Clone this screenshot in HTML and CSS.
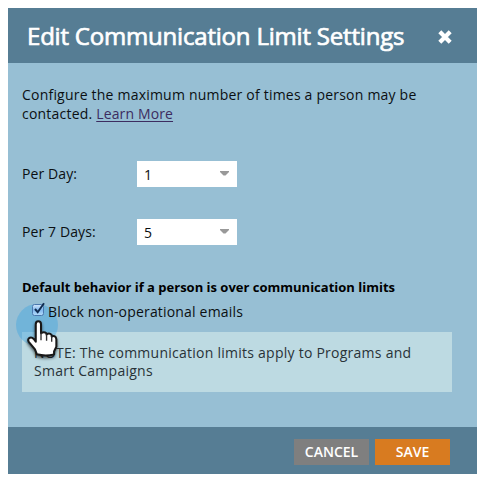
FILE: index.html
```html
<!DOCTYPE html>
<html lang="en">
<head>
<meta charset="utf-8">
<title>Edit Communication Limit Settings</title>
<link rel="stylesheet" href="styles.css">
</head>
<body>
<section class="dialog">
  <header class="header">
    <h1 class="title">Edit Communication Limit Settings</h1>
    <svg class="close" width="14" height="14" viewBox="0 0 14 14"><path d="M1.8 1.8 12.2 12.2M12.2 1.8 1.8 12.2" stroke="#fff" stroke-width="4.2"/></svg>
  </header>
  <main class="body">
    <p class="intro">Configure the maximum number of times a person may be<br>contacted. <a class="link">Learn More</a></p>
    <div class="field">
      <span class="label">Per Day:</span>
      <div class="select"><span>1</span><svg width="9" height="5" viewBox="0 0 9 5"><path d="M0 0H9V1L5.5 4.5H3.5L0 1Z" fill="#999"/></svg></div>
    </div>
    <div class="field">
      <span class="label">Per 7 Days:</span>
      <div class="select"><span>5</span><svg width="9" height="5" viewBox="0 0 9 5"><path d="M0 0H9V1L5.5 4.5H3.5L0 1Z" fill="#999"/></svg></div>
    </div>
    <h2 class="subhead">Default behavior if a person is over communication limits</h2>
    <div class="halo"></div>
    <div class="check">
      <svg width="14" height="15" viewBox="0 0 14 15"><defs><linearGradient id="box" x1="0" y1="0" x2="0" y2="1"><stop offset="0" stop-color="#d4e8fb"/><stop offset=".5" stop-color="#82b8ee"/><stop offset="1" stop-color="#b5ddfb"/></linearGradient></defs><rect x=".5" y="2.5" width="11" height="11" rx="2" fill="url(#box)" stroke="#4b78ae"/><path d="M3 7 5.7 10.2 12 1.2" fill="none" stroke="#102c50" stroke-width="2"/></svg>
      <span>Block non-operational emails</span>
    </div>
    <div class="note">NOTE: The communication limits apply to Programs and<br>Smart Campaigns</div>
    <svg class="hand" width="41" height="50" viewBox="0 0 36 44"><path d="M12.2 32 10.5 27.7 5.2 21.2Q3.7 19 5.5 17.6Q7.5 16.5 9.4 18.4L11.2 20.8V5.5Q11.2 2.8 13.4 2.8Q15.8 2.8 15.8 5.5V13.5Q18.3 11.6 20.5 13.4L20.7 14.5Q23.3 12.6 25.2 15.1V16.3Q28.7 14.8 29.3 18.6V25.2L27.3 29.5V32Q20 34 12.2 32Z" fill="#fff" stroke="#181818" stroke-width="1.8" stroke-linejoin="round"/><path d="M15.8 13V19.5M20.7 14.5V20M25.2 16V21" stroke="#333" stroke-width="1.2"/></svg>
  </main>
  <footer class="footer">
    <button class="btn cancel">CANCEL</button>
    <button class="btn save">SAVE</button>
  </footer>
</section>
</body>
</html>
```

FILE: styles.css
```css
* { box-sizing: border-box; }
body { margin: 0; padding: 8px; background: #fff; font: 14px/19px "Open Sans", "Noto Sans", sans-serif; color: #0b0f12; }
.dialog { width: 469px; height: 466px; display: flex; flex-direction: column; background: #97bfd4; white-space: nowrap; }
.header { height: 55px; flex: none; display: flex; align-items: center; justify-content: space-between; padding: 0 25px 0 19px; background: #567d94; }
.title { margin: 0; font-size: 24px; line-height: 32px; font-weight: 400; color: #fff; letter-spacing: -0.2px; -webkit-text-stroke: .7px #fff; }
.close { margin-top: 3px; }
.body { position: relative; flex: 1; padding: 22px 25px 0 14px; }
.intro { margin: 0 0 38px; letter-spacing: 0.21px; }
.link { color: #3c2c60; text-decoration: underline; text-underline-offset: 2px; letter-spacing: 0.13px; }
.field { display: flex; align-items: center; height: 26px; margin-bottom: 32px; }
.label { width: 115px; margin-top: -2px; letter-spacing: 0.1px; }
.select { width: 100px; height: 26px; display: flex; justify-content: space-between; align-items: center; background: #fff; padding: 1px 8px 0 7px; }
.select svg { margin-top: -3px; }
.subhead { margin: 0; padding-top: 1px; font-size: 13px; line-height: 18px; font-weight: 700; color: #000; }
.check { position: relative; display: flex; align-items: center; height: 20px; margin: 5px 0 11px 10px; gap: 2px; letter-spacing: 0.18px; }
.check svg { margin-top: -3px; }
.note { height: 60px; padding: 12px; line-height: 18px; letter-spacing: 0.25px; background: #bddae2; color: #293338; }
.halo { position: absolute; left: 8px; top: 241px; width: 42px; height: 42px; border-radius: 50%; background: #3ea5e0; opacity: .42; }
.hand { position: absolute; left: 15px; top: 255px; filter: drop-shadow(0 2px 1.5px rgba(0,0,0,.6)); }
.footer { height: 47px; flex: none; display: flex; justify-content: flex-end; gap: 6px; padding: 12px 27px 0 0; background: #567d94; }
.btn { width: 75px; height: 26px; border: 0; padding: 0; color: #fff; font: 600 14px/26px "Open Sans", sans-serif; }
.cancel { background: #7f7f7f; }
.save { background: #d87b20; }
```
